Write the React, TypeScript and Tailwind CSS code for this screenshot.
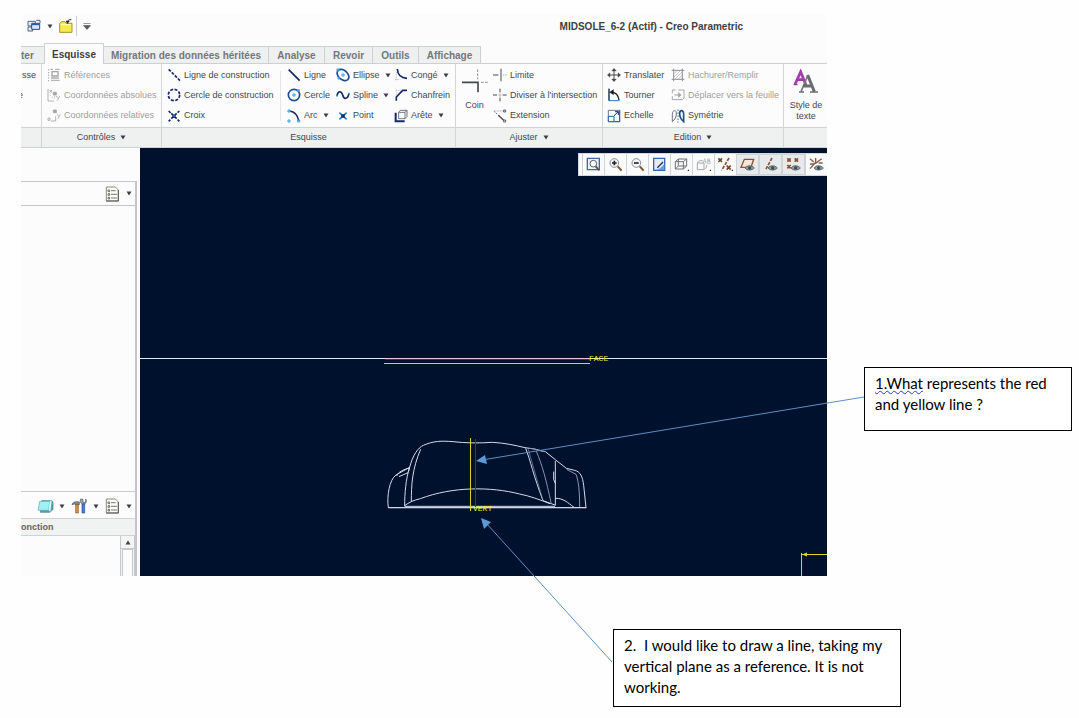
import React from "react";
import clsx from "clsx";

const NAVY = "#16286b";
const BLUE = "#2fa4e7";
const GREY = "#a3a5a8";
const DARK = "#45484d";

const Caret = ({ className }: { className?: string }) => (
  <svg viewBox="0 0 6 5" className={clsx("h-[5px] w-[6px] shrink-0", className)} fill="#3c3f44">
    <path d="M.5 .5h5L3 4.5z" />
  </svg>
);

/* Ribbon icons, all drawn on a 42 unit grid */
const icons: Record<string, React.ReactNode> = {
  references: (
    <g stroke={GREY} strokeWidth="3">
      <path d="M10 4h8M24 4h14M12 37h26" />
      <path d="M15 11h18v13H15z" strokeWidth="4" />
      <path d="M12 30h24" strokeWidth="4" />
      <path d="M5 4v36" strokeDasharray="4 4" />
    </g>
  ),
  absolues: (
    <g stroke={GREY} strokeWidth="2.5">
      <path d="M3 3v36h18M8 6l7 8M15 6l-7 8M28 24l5 7M38 24l-7 14" />
      <path d="M19 13h9v8h-9z" fill={GREY} />
      <path d="M8 23h4M14 28h4M23 25v8" strokeDasharray="3 3" />
    </g>
  ),
  relatives: (
    <g stroke={GREY} strokeWidth="2.5">
      <path d="M3 27h6v7H3zM12 36h14V22M31 16l4 7M40 16l-7 13" />
      <path d="M19 3h9v8h-9z" fill={GREY} />
    </g>
  ),
  ligneC: <path d="M5 4l34 34" stroke={NAVY} strokeWidth="5" strokeDasharray="9 4" />,
  cercleC: <circle cx="21" cy="21" r="17" stroke={NAVY} strokeWidth="5" strokeDasharray="9 4.3" />,
  croix: (
    <g stroke={NAVY} strokeWidth="5">
      <path d="M5 6l6 6M13 13l16 16M32 32l5 5M37 6l-5 5M29 13L13 29M10 32l-5 5" />
      <path d="M15 21h12" stroke="#3f62b5" />
    </g>
  ),
  ligne: <path d="M5 5l33 33" stroke={NAVY} strokeWidth="5" />,
  cercle: (
    <g>
      <circle cx="21" cy="21" r="17" stroke="#1d4a93" strokeWidth="5" />
      <path d="M18 18h6v6h-6zM31 5h6v6h-6z" stroke={BLUE} strokeWidth="3" />
    </g>
  ),
  arc: (
    <g>
      <path d="M8 6c16 2 24 12 27 29" stroke={NAVY} strokeWidth="5" />
      <path d="M3 3h6v6H3zM3 33h6v6H3zM32 33h6v6h-6z" stroke={BLUE} strokeWidth="3" />
    </g>
  ),
  ellipse: (
    <g>
      <ellipse cx="21" cy="21" rx="20" ry="14" transform="rotate(42 21 21)" stroke="#1d4a93" strokeWidth="5" />
      <path d="M18 18h6v6h-6zM3 3h6v6H3zM6 28h5v5H6z" stroke={BLUE} strokeWidth="3" />
    </g>
  ),
  spline: (
    <g>
      <path d="M3 24c2-16 13-17 17-3s15 14 19-5" stroke={NAVY} strokeWidth="5" />
      <path d="M3 21v5M38 14v5" stroke={BLUE} strokeWidth="4" />
    </g>
  ),
  point: (
    <g strokeWidth="5">
      <path d="M10 11l22 20M32 11L10 31" stroke="#2f86d0" />
      <path d="M16 16l10 10M26 16L16 26" stroke={NAVY} />
    </g>
  ),
  conge: (
    <g>
      <path d="M10 3c1 17 8 27 29 28" stroke={NAVY} strokeWidth="5" />
      <path d="M7 12v25M3 34h16" stroke={GREY} strokeWidth="2" strokeDasharray="4 3" />
    </g>
  ),
  chanfrein: (
    <g>
      <path d="M7 38V27L26 7h13" stroke={NAVY} strokeWidth="5" />
      <path d="M7 23V7h14" stroke={GREY} strokeWidth="2" strokeDasharray="4 3" />
    </g>
  ),
  arete: (
    <g>
      <path d="M5 11v26h27" stroke={NAVY} strokeWidth="6" />
      <path d="M14 10h19v19H14zM14 10l5-6h20v19l-6 6M33 10l6-6" stroke="#5a5d68" strokeWidth="2.5" />
    </g>
  ),
  limite: (
    <g stroke={DARK} strokeWidth="3">
      <path d="M0 21h16M24 2v38" />
      <path d="M30 21h12" stroke={GREY} strokeDasharray="4 3" />
    </g>
  ),
  diviser: (
    <g stroke={DARK} strokeWidth="3">
      <path d="M0 21h12M29 21h12M21 2v11M21 29v11" />
      <path d="M15 21h11M21 16v11" stroke={GREY} strokeWidth="2" />
    </g>
  ),
  extension: (
    <g stroke={DARK} strokeWidth="2.5">
      <path d="M2 6h34" strokeDasharray="6 3" stroke={GREY} />
      <path d="M32 3h6v6h-6zM32 33h6v6h-6z" />
      <path d="M4 8l12 10" strokeDasharray="4 3" />
      <path d="M16 19l16 15" strokeWidth="4" />
    </g>
  ),
  translater: (
    <g stroke={DARK} strokeWidth="3">
      <path d="M21 3v36M3 21h36" />
      <path d="M21 1l7 8h-14zM21 41l7-8h-14zM1 21l8-7v14zM41 21l-8-7v14z" fill={DARK} strokeWidth="1" />
    </g>
  ),
  tourner: (
    <g>
      <path d="M6 2v36h32" stroke="#2f7cc0" strokeWidth="3" />
      <path d="M6 2v36" stroke="#17191e" strokeWidth="3" />
      <path d="M14 13c13 0 20 9 22 23" stroke="#17191e" strokeWidth="4" />
      <path d="M7 13l13-9v17z" fill="#17191e" />
    </g>
  ),
  echelle: (
    <g>
      <path d="M4 4h34v34H4z" stroke="#6f7886" strokeWidth="3" />
      <path d="M4 22h17v16H4z" stroke="#1c5fa8" strokeWidth="3" fill="#fff" />
      <path d="M21 20L34 8M24 8h10v10" stroke={NAVY} strokeWidth="3" />
      <path d="M38 4v34H22" stroke="#1c5fa8" strokeWidth="3" />
    </g>
  ),
  hachurer: (
    <g stroke="#8d8f92" strokeWidth="3">
      <path d="M8 2v38M34 2v38M2 7h38M2 34h38" />
      <path d="M9 17L18 8M9 27L28 8M12 33L33 12M22 33l11-11" strokeWidth="1.5" />
    </g>
  ),
  deplacer: (
    <g stroke={GREY} strokeWidth="3">
      <path d="M14 6H4v10M4 25v10h30l5-5V6H22M10 21h18" />
      <path d="M22 13l9 8-9 8z" fill={GREY} strokeWidth="1" />
    </g>
  ),
  symetrie: (
    <g strokeWidth="4">
      <path d="M4 38V17c0-9 3-12 7-12s5 4 5 10c0 9-4 16-12 23z" stroke="#6d717c" strokeWidth="3" />
      <path d="M21 1v40" stroke={NAVY} strokeWidth="2" strokeDasharray="5 4" />
      <path d="M38 38V17c0-9-3-12-7-12s-5 4-5 10c0 9 4 16 12 23z" stroke="#1c4f98" strokeWidth="5" />
    </g>
  ),
};

type ToolProps = { icon: string; label: string; caret?: boolean; disabled?: boolean };

const Tool = ({ icon, label, caret, disabled }: ToolProps) => (
  <button type="button" disabled={disabled} className="flex items-center gap-[3px] whitespace-nowrap text-left">
    <svg viewBox="0 0 42 42" fill="none" className="size-[14px] shrink-0">
      {icons[icon]}
    </svg>
    <span className={disabled ? "text-[#9c9ea1]" : "text-[#44474c]"}>{label}</span>
    {caret && <Caret className="ml-[2px]" />}
  </button>
);

const Column = ({ tools, className }: { tools: ToolProps[]; className?: string }) => (
  <div className={clsx("grid h-[61px] shrink-0 grid-rows-3", className)}>
    {tools.map((t) => (
      <Tool key={t.label} {...t} />
    ))}
  </div>
);

type GroupProps = { label?: string; caret?: boolean; className?: string; children?: React.ReactNode };

const Group = ({ label, caret, className, children }: GroupProps) => (
  <section className={clsx("flex flex-col border-r border-[#d3d6d8]", className)}>
    <div className="flex h-[63px] pt-px">{children}</div>
    <div className="flex h-[21px] items-center justify-center gap-[5px] border-y border-[#d0d3d5] bg-[#eff1f1] text-[#44474c]">
      {label}
      {caret && <Caret />}
    </div>
  </section>
);

const tabs = [
  { label: "Migration des données héritées", width: "w-[165px]" },
  { label: "Analyse", width: "w-[56px]" },
  { label: "Revoir", width: "w-[48px]" },
  { label: "Outils", width: "w-[46px]" },
  { label: "Affichage", width: "w-[62px]" },
];

const TitleBar = () => (
  <header className="flex h-[29px] items-center pb-[5px] pl-[6px]">
    <button type="button" aria-label="Fenêtres" className="flex items-center gap-[6px]">
      <svg viewBox="0 0 42 42" fill="none" className="size-[14px]" stroke="#4f628c" strokeWidth="3">
        <path d="M3 7h22v14H3zM3 24h14v12H3z" fill="#eef3fa" />
        <path d="M14 13h24v18H14z" fill="#dbe8f7" stroke="#2a4a8e" />
        <path d="M14 16h24" stroke="#2a5db0" strokeWidth="5" />
        <path d="M28 4h11v8" />
      </svg>
      <Caret />
    </button>
    <button type="button" aria-label="Ouvrir" className="ml-[5px]">
      <svg viewBox="0 0 48 48" fill="none" className="size-[16px]">
        <path d="M5 17l5-6h11l4 5h17v27H5z" fill="#f6ea4c" stroke="#a79526" strokeWidth="3" />
        <path d="M8 20h31" stroke="#fdf9a9" strokeWidth="4" />
        <path d="M28 14c0-8 5-9 12-9" stroke="#23252a" strokeWidth="3" />
        <path d="M23 8l12 1-7 9z" fill="#23252a" />
      </svg>
    </button>
    <span className="ml-[2px] h-[20px] w-px bg-[#c9ccd2]" />
    <button type="button" aria-label="Personnaliser" className="ml-[6px]">
      <svg viewBox="0 0 8 7" className="h-[7px] w-[8px]">
        <path d="M.5 .5h7M.5 2.5h7L4 6.5z" fill="#55585e" stroke="#55585e" strokeWidth=".6" />
      </svg>
    </button>
    <h1 className="ml-auto mr-[84px] text-[10px] font-bold text-[#3c3f44]">MIDSOLE_6-2 (Actif) - Creo Parametric</h1>
  </header>
);

const Tabs = () => (
  <nav className="flex h-[21px] items-end border-b border-[#cdd0d2] text-[10px] font-bold text-[#74777b]">
    <button type="button" className="flex h-[17px] w-[23px] items-center border-t border-[#cdd0d2] bg-[#eef0f0]">
      ter
    </button>
    <button type="button" className="-mb-px h-[21px] w-[60px] border border-b-0 border-[#cdd0d2] bg-[#fcfcfc] text-[#3c3f44]">
      Esquisse
    </button>
    {tabs.map((t) => (
      <button
        key={t.label}
        type="button"
        className={clsx("h-[17px] whitespace-nowrap border-r border-t border-[#cdd0d2] bg-[#eef0f0]", t.width)}
      >
        {t.label}
      </button>
    ))}
  </nav>
);

const Ribbon = () => (
  <div className="flex text-[9px] leading-[11px]">
    <Group className="w-[21px] shrink-0">
      <div className="flex h-[61px] w-[15px] flex-col items-end overflow-hidden text-[#44474c]">
        <span className="flex h-[20px] items-center">sse</span>
        <span className="flex h-[20px] w-[2px] items-center justify-end self-start overflow-hidden">e</span>
      </div>
    </Group>
    <Group label="Contrôles" caret className="w-[120px] shrink-0">
      <Column
        className="pl-[5px]"
        tools={[
          { icon: "references", label: "Références", disabled: true },
          { icon: "absolues", label: "Coordonnées absolues", disabled: true },
          { icon: "relatives", label: "Coordonnées relatives", disabled: true },
        ]}
      />
    </Group>
    <Group label="Esquisse" className="w-[294px] shrink-0">
      <Column
        className="w-[118px] pl-[5px]"
        tools={[
          { icon: "ligneC", label: "Ligne de construction" },
          { icon: "cercleC", label: "Cercle de construction" },
          { icon: "croix", label: "Croix" },
        ]}
      />
      <span className="my-[6px] w-px bg-[#e3e5e6]" />
      <Column
        className="w-[49px] pl-[6px]"
        tools={[
          { icon: "ligne", label: "Ligne" },
          { icon: "cercle", label: "Cercle" },
          { icon: "arc", label: "Arc", caret: true },
        ]}
      />
      <Column
        className="w-[59px] pl-[6px]"
        tools={[
          { icon: "ellipse", label: "Ellipse", caret: true },
          { icon: "spline", label: "Spline", caret: true },
          { icon: "point", label: "Point" },
        ]}
      />
      <Column
        className="pl-[5px]"
        tools={[
          { icon: "conge", label: "Congé", caret: true },
          { icon: "chanfrein", label: "Chanfrein" },
          { icon: "arete", label: "Arête", caret: true },
        ]}
      />
    </Group>
    <Group label="Ajuster" caret className="w-[147px] shrink-0">
      <button type="button" className="flex w-[37px] flex-col items-center gap-[5px] pt-[3px] text-[#44474c]">
        <svg viewBox="0 0 81 81" fill="none" className="size-[27px] shrink-0">
          <path d="M3 43h48v30" stroke={DARK} strokeWidth="5" />
          <path d="M50 4v30M60 43h20" stroke="#8b8d91" strokeWidth="3" strokeDasharray="8 4" />
        </svg>
        Coin
      </button>
      <Column
        tools={[
          { icon: "limite", label: "Limite" },
          { icon: "diviser", label: "Diviser à l'intersection" },
          { icon: "extension", label: "Extension" },
        ]}
      />
    </Group>
    <Group label="Edition" caret className="w-[181px] shrink-0">
      <Column
        className="w-[68px] pl-[4px]"
        tools={[
          { icon: "translater", label: "Translater" },
          { icon: "tourner", label: "Tourner" },
          { icon: "echelle", label: "Echelle" },
        ]}
      />
      <Column
        tools={[
          { icon: "hachurer", label: "Hachurer/Remplir", disabled: true },
          { icon: "deplacer", label: "Déplacer vers la feuille", disabled: true },
          { icon: "symetrie", label: "Symétrie" },
        ]}
      />
    </Group>
    <Group className="flex-1 border-r-0">
      <button type="button" className="flex w-[44px] flex-col items-center gap-[6px] pt-[4px] text-[#44474c]">
        <svg viewBox="0 0 78 75" fill="none" className="h-[25px] w-[26px] shrink-0">
          <path d="M6 46L23 8l15 38M12 32h22" stroke="#a03bb0" strokeWidth="8" />
          <path d="M2 47h12M32 47h10" stroke="#a03bb0" strokeWidth="4" />
          <path d="M24 68L45 18" stroke="#777a7e" strokeWidth="5" />
          <path d="M44 18l20 50M30 51h26" stroke="#6a6d71" strokeWidth="9" />
          <path d="M18 69h15M51 69h24" stroke="#6a6d71" strokeWidth="5" />
        </svg>
        <span>
          Style de
          <br />
          texte
        </span>
      </button>
    </Group>
  </div>
);

const ListIcon = () => (
  <svg viewBox="0 0 45 48" fill="none" className="h-[16px] w-[15px]">
    <path d="M4 3h27l9 9v33H4z" fill="#fdfdf8" stroke="#8b8b80" strokeWidth="3" />
    <path d="M40 12v33H4" stroke="#55564e" strokeWidth="3" />
    <path d="M18 14h14M18 25h18M18 36h18" stroke="#77786f" strokeWidth="3" />
    <path d="M9 12h5v5H9zM9 23h5v5H9zM9 34h5v5H9z" stroke="#3c3d38" strokeWidth="2" />
  </svg>
);

const SidePanel = () => (
  <aside className="flex w-[116px] shrink-0 flex-col pt-[33px]">
    <div className="flex flex-1 flex-col border-r-2 border-t border-[#c2c6ca]">
      <div className="flex h-[24px] items-center justify-end border-b border-[#c2c6ca] pr-[3px]">
        <button type="button" aria-label="Paramètres" className="flex items-center gap-[6px]">
          <ListIcon />
          <Caret />
        </button>
      </div>
      <div className="flex-1" />
      <div className="flex h-[27px] items-center justify-end gap-[6px] border-t border-[#c9cdd0] pr-[3px] pt-[2px]">
        <button type="button" aria-label="Affichage des objets" className="flex items-center gap-[5px]">
          <svg viewBox="0 0 51 48" fill="none" className="h-[16px] w-[17px]">
            <path d="M14 8h30l4 4v22l-9 9H10z" fill="#4ba8b2" stroke="#4d7d86" strokeWidth="2" />
            <path d="M8 10h30l-3 27H3z" fill="#a3f0f2" stroke="#5ba9b0" strokeWidth="2" />
            <path d="M38 10l6-2-4 33-5-4z" fill="#d5fbfb" />
          </svg>
          <Caret />
        </button>
        <button type="button" aria-label="Outils du modèle" className="flex items-center gap-[6px]">
          <svg viewBox="0 0 48 48" fill="none" className="size-[16px]">
            <path d="M3 20c2-8 8-10 22-8v8H15l-5-2z" fill="#85898c" stroke="#505458" strokeWidth="2" />
            <path d="M14 20h8v25h-8z" fill="#dc9345" stroke="#8c531c" strokeWidth="2" />
            <path d="M29 3c-3 8 0 12 4 15h8c5-4 7-9 3-15v10h-8V4z" fill="#98a9ab" stroke="#515b5e" strokeWidth="2" />
            <path d="M33 18h8v27h-8z" fill="#4b80d1" stroke="#264d91" strokeWidth="2" />
          </svg>
          <Caret />
        </button>
        <button type="button" aria-label="Liste" className="flex items-center gap-[6px]">
          <ListIcon />
          <Caret />
        </button>
      </div>
      <div className="h-[18px] border-y border-[#d0d3d5] bg-[#f1f2f2] text-[9px] font-bold leading-[16px] text-[#606368]">
        onction
      </div>
      <div className="flex h-[40px] justify-end">
        <div className="flex w-[15px] flex-col border-x border-[#c5c9cc] bg-[#f3f4f4]">
          <button type="button" aria-label="Défiler vers le haut" className="flex h-[13px] items-center justify-center border-b border-[#c5c9cc]">
            <Caret className="rotate-180" />
          </button>
          <div className="mx-px flex-1 border-x border-t border-[#c5c9cc] bg-[#fbfbfb]" />
        </div>
      </div>
    </div>
  </aside>
);

const lens = (
  <g>
    <circle cx="19" cy="18" r="13" stroke="#8a8e94" strokeWidth="3" fill="#f2f6fa" />
    <path d="M29 28l12 13" stroke="#7d4f37" strokeWidth="6" />
  </g>
);

const eye = (
  <g>
    <path d="M15 33c6-9 20-9 28 0-8 8-22 8-28 0z" fill="#8fa0a0" stroke="#5d6a6c" strokeWidth="3" />
    <circle cx="29" cy="33" r="5" fill="#3c4a50" />
  </g>
);

const viewTools = [
  {
    label: "Recadrer",
    art: (
      <>
        <path d="M4 4h36v34H4z" stroke="#4068a8" strokeWidth="4" fill="#eaf1fa" />
        <circle cx="22" cy="20" r="10" stroke="#565c66" strokeWidth="3" fill="#fff" />
        <path d="M29 28l11 12" stroke="#6c5145" strokeWidth="6" />
      </>
    ),
  },
  { label: "Zoom avant", art: <>{lens}<path d="M12 18h14M19 11v14" stroke="#222" strokeWidth="5" /></> },
  { label: "Zoom arrière", art: <>{lens}<path d="M12 18h14" stroke="#222" strokeWidth="5" /></> },
  {
    label: "Redessiner",
    art: (
      <>
        <path d="M5 4h33v36H5z" stroke="#3465ad" strokeWidth="4" fill="#e3edfb" />
        <path d="M37 20v19H10c12-3 20-9 27-19z" fill="#6f9bd8" />
        <path d="M16 32l17-17" stroke="#1d345f" strokeWidth="4" />
      </>
    ),
  },
  {
    label: "Style d'affichage",
    art: (
      <>
        <path d="M4 14h24v22H4zM13 6h25v21H13zM4 14l9-8M28 14l10-8M28 36l10-9M4 36l9-9" stroke="#6f7276" strokeWidth="3" />
        <path d="M40 42h6v-6z" fill="#222" />
      </>
    ),
  },
  {
    label: "Orientations enregistrées",
    art: (
      <>
        <path d="M4 18h20v20H4zM4 18l7-7h9M24 38l8-8v-6" stroke="#a7a9ad" strokeWidth="3" />
        <path d="M21 20l5-15 5 15M23 14h7M35 20V6h6v6h-6 7v8z" stroke="#a7a9ad" strokeWidth="2" />
        <path d="M40 42h6v-6z" fill="#222" />
      </>
    ),
  },
  {
    label: "Filtres de référence",
    art: (
      <>
        <path d="M1 4l11 11M12 4L1 15M26 26l12 12M38 26L26 38" stroke="#75452c" strokeWidth="5" />
        <path d="M33 3L11 40" stroke="#8a4f2e" strokeWidth="5" strokeDasharray="10 4" />
        <path d="M40 42h6v-6z" fill="#222" />
      </>
    ),
  },
  { label: "Plans", on: true, art: <><path d="M13 7h28l-8 24H3z" stroke="#8b5330" strokeWidth="4" fill="#f8e7d8" />{eye}</> },
  { label: "Axes", on: true, art: <><path d="M27 3L7 40" stroke="#8b5330" strokeWidth="5" strokeDasharray="10 4" />{eye}</> },
  {
    label: "Points",
    on: true,
    art: (
      <>
        <path d="M4 4l10 10M14 4L4 14M26 4l10 10M36 4L26 14M4 24l10 10M14 24L4 34" stroke="#8b4e2a" strokeWidth="5" />
        {eye}
      </>
    ),
  },
  {
    label: "Repères",
    art: (
      <>
        <path d="M3 5l11 10M3 35l18-20M20 3v18M22 17L38 5M3 21h14M29 18h12" stroke="#8b5b42" strokeWidth="4" />
        {eye}
      </>
    ),
  },
];

const ViewToolbar = () => (
  <div className="relative flex h-[23px] w-[249px] border border-r-0 border-[#d5d8da] bg-[#f9fafa] pl-[3px]">
    {viewTools.map((t) => (
      <button
        key={t.label}
        type="button"
        aria-label={t.label}
        className={clsx(
          "flex flex-1 items-center justify-center border-l border-[#d0d3d6]",
          t.on && "border border-[#b3bac0] bg-[#e7eaec]",
        )}
      >
        <svg viewBox="0 0 45 45" fill="none" className="size-[15px] shrink-0">
          {t.art}
        </svg>
      </button>
    ))}
  </div>
);

/* The sketch: datum lines, section outline and the dimension in the corner */
const Sketch = () => (
  <svg viewBox="0 0 687 428" fill="none" className="absolute right-0 top-0 h-[428px] w-[687px] overflow-visible">
    <path d="M-3000 210.5H687" stroke="#e4e7f0" />
    <path d="M245 210.5h205" stroke="#f3c3d8" />
    <path d="M245 211.5h205" stroke="#7d1440" />
    <path d="M244 215.5h206" stroke="#d2dc28" />
    <svg x="235" y="192" width="250" height="190" viewBox="0 0 750 570" stroke="#d5daea" strokeWidth="3">
      <path d="M40 503c-5-34 3-84 23-98l41-23c9-36 25-59 41-66 29-13 54-14 89-11 36 4 78 5 118 2 38 2 69 9 98 16l28 4 33 8 30 24 33 26 25 6c17 4 24 19 27 45l7 67z" />
      <path d="M65 408c5-13 19-18 39-25M72 410l27-12 5-15" />
      <path d="M89 499c0-38 3-80 15-118M109 485c0-48 2-98 28-157" />
      <path d="M89 497c13-10 26-16 47-21 98-37 212-36 298-14 30 6 60 17 91 29" />
      <path d="M90 499h450" />
      <path d="M452 325c14 35 23 81 52 157l36 13" />
      <path d="M459 325c24 0 36 10 50 10M484 334c18 41 29 84 45 158" stroke="#8891ab" />
      <path d="M459 325l46 160" strokeWidth="2" stroke="#8891ab" />
      <path d="M541 363v134M536 395v23l5 12M541 475c24-1 37 13 56 27" />
      <path d="M575 388l28 15c8 19 11 55 11 99" strokeWidth="2" />
      <path d="M40 503h594" />
    </svg>
    <path d="M330.5 290v73" stroke="#d2dc28" />
    <path d="M335.5 291v68" stroke="#8a1546" />
    <path d="M661.5 428v-23M661 406.5h26" stroke="#d2dc28" />
    <path d="M662 406.5l5-2v4z" fill="#d2dc28" />
    <g className="fill-[#eef02a] font-['Liberation_Mono',monospace] text-[8px]">
      <text x="449" y="213">FACE</text>
      <text x="333" y="363">VERT</text>
    </g>
  </svg>
);

const Arrows = () => (
  <svg viewBox="0 0 1079 718" fill="#5b9bd5" stroke="#5b8fc4" className="pointer-events-none absolute right-0 top-0 h-[718px] w-[1079px]">
    <path d="M864 397L482 460" />
    <path d="M476 461l9-6 2 9z" stroke="none" />
    <path d="M612 662L486 523" />
    <path d="M481 518l10 4-7 7z" stroke="none" />
  </svg>
);

const Note = ({ className, children }: { className?: string; children: React.ReactNode }) => (
  <p className={clsx("border border-black bg-white px-[10px] pt-[5px] font-['Lato',sans-serif] text-[15px] leading-[21px] text-black", className)}>
    {children}
  </p>
);

export default function App() {
  return (
    <main className="relative min-h-screen overflow-hidden bg-[#fefefe] pt-[14px]">
      <div className="flex pl-[21px]">
        <div className="min-w-0 flex-1 overflow-hidden bg-[#fcfcfc] font-['Liberation_Sans',sans-serif]">
          <TitleBar />
          <Tabs />
          <Ribbon />
          <div className="flex">
            <SidePanel />
            <div className="relative ml-[3px] flex min-h-[428px] flex-1 justify-end overflow-hidden bg-[#00112e] pt-[5px]">
              <Sketch />
              <ViewToolbar />
            </div>
          </div>
        </div>
        <div className="w-[252px] shrink-0 pl-[37px] pr-[7px] pt-[353px]">
          <Note className="min-h-[64px]">
            <span className="underline decoration-[#2b35d8] decoration-wavy decoration-1 underline-offset-1">1.What</span> represents the red
            and yellow line ?
          </Note>
        </div>
      </div>
      <div className="flex justify-end pr-[178px] pt-[53px]">
        <Note className="min-h-[78px] w-[288px]">
          2.&nbsp; I would like to draw a line, taking my vertical plane as a reference. It is not working.
        </Note>
      </div>
      <Arrows />
    </main>
  );
}
